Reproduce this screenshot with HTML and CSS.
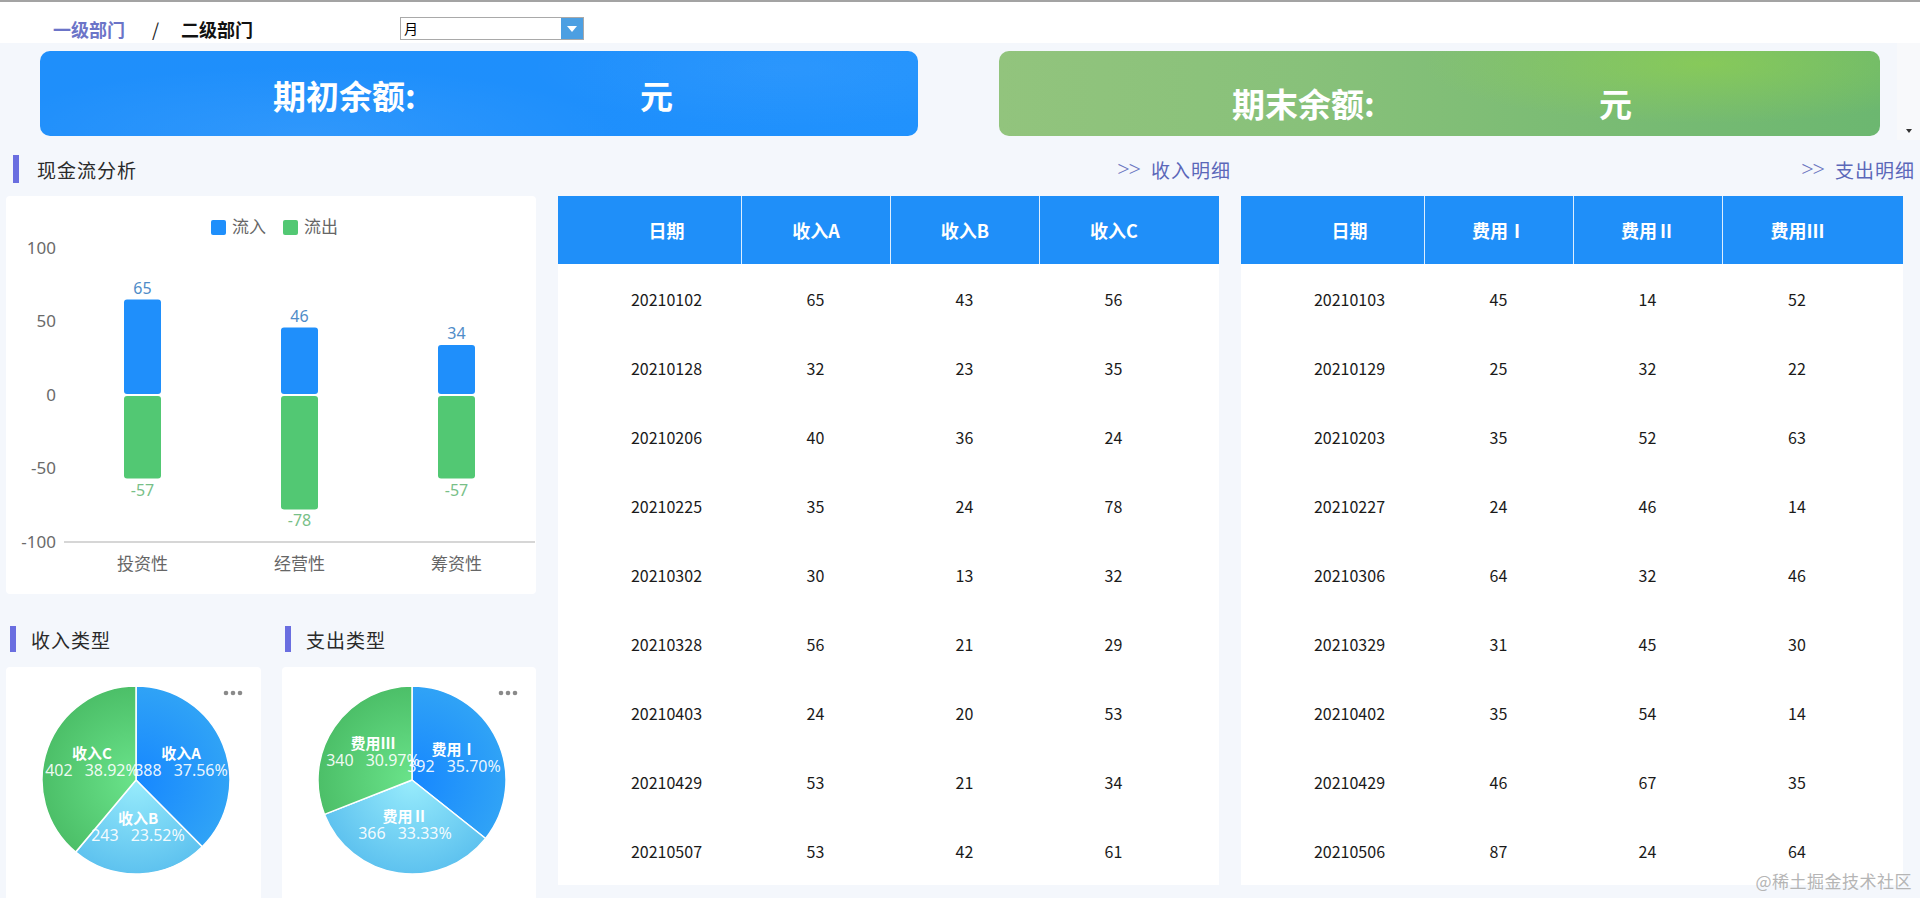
FILE: index.html
```html
<!DOCTYPE html>
<html lang="zh-CN">
<head>
<meta charset="utf-8">
<title>现金流分析</title>
<link rel="stylesheet" href="styles.css">
</head>
<body>
<div class="topline"></div>
<div class="header">
  <div class="crumbs">
    <span class="crumb-first">一级部门</span>
    <span class="crumb-sep">/</span>
    <span class="crumb-cur">二级部门</span>
  </div>
  <div class="select">
    <span class="select-val">月</span>
    <span class="select-btn"><svg width="10" height="6" viewBox="0 0 10 6"><path d="M0 0H10L5 6Z" fill="#fff"/></svg></span>
  </div>
</div>

<div class="banner-row">
  <div class="banner banner-blue">
    <span class="banner-label">期初余额:</span><span class="banner-unit">元</span>
  </div>
  <div class="banner banner-green">
    <span class="banner-label">期末余额:</span><span class="banner-unit">元</span>
  </div>
  <div class="vscroll"><span class="vscroll-arrow"></span></div>
</div>

<div class="main">
  <div class="col col-left">
    <div class="title-row">
      <span class="title-bar"></span><span class="title-text">现金流分析</span>
    </div>
    <div class="card bar-card">
      <svg class="chart" width="530" height="398" viewBox="0 0 530 398">
        <rect x="205" y="24" width="15" height="15" rx="2" fill="#1f8ffb"/>
        <text class="lg" x="226" y="37">流入</text>
        <rect x="277" y="24" width="15" height="15" rx="2" fill="#52c873"/>
        <text class="lg" x="298" y="37">流出</text>

        <text class="ay" x="50" y="58">100</text>
        <text class="ay" x="50" y="131">50</text>
        <text class="ay" x="50" y="205">0</text>
        <text class="ay" x="50" y="278">-50</text>
        <text class="ay" x="50" y="352">-100</text>
        <line x1="58" y1="346" x2="529" y2="346" stroke="#c8c8c8" stroke-width="1.5"/>

        <rect x="118" y="103.6" width="37" height="94.4" rx="3" fill="#1f8ffb"/>
        <rect x="118" y="200" width="37" height="82.6" rx="3" fill="#52c873"/>
        <rect x="275" y="131.5" width="37" height="66.5" rx="3" fill="#1f8ffb"/>
        <rect x="275" y="200" width="37" height="113.4" rx="3" fill="#52c873"/>
        <rect x="432" y="149.1" width="37" height="48.9" rx="3" fill="#1f8ffb"/>
        <rect x="432" y="200" width="37" height="82.6" rx="3" fill="#52c873"/>

        <text class="vb" x="136.5" y="98">65</text>
        <text class="vb" x="293.5" y="126">46</text>
        <text class="vb" x="450.5" y="143">34</text>
        <text class="vg" x="136.5" y="300">-57</text>
        <text class="vg" x="293.5" y="330">-78</text>
        <text class="vg" x="450.5" y="300">-57</text>

        <text class="ax" x="136.5" y="374">投资性</text>
        <text class="ax" x="293.5" y="374">经营性</text>
        <text class="ax" x="450.5" y="374">筹资性</text>
      </svg>
    </div>
    <div class="pie-row">
      <div class="pie-col pie-col-1">
        <div class="sub-title-row">
          <span class="title-bar sub-bar"></span><span class="title-text">收入类型</span>
        </div>
        <div class="card pie-card">
          <svg class="pie" width="255" height="240" viewBox="0 0 255 240">
            <defs>
              <radialGradient id="ga1" cx="130" cy="113" r="94" gradientUnits="userSpaceOnUse"><stop offset="0" stop-color="#1687ff"/><stop offset="1" stop-color="#30a3f6"/></radialGradient>
              <radialGradient id="gb1" cx="130" cy="113" r="94" gradientUnits="userSpaceOnUse"><stop offset="0" stop-color="#98ecfc"/><stop offset="1" stop-color="#5ec2ef"/></radialGradient>
              <radialGradient id="gc1" cx="130" cy="113" r="94" gradientUnits="userSpaceOnUse"><stop offset="0" stop-color="#6ae38a"/><stop offset="1" stop-color="#4cbf68"/></radialGradient>
            </defs>
            <path d="M130 113L130 19A94 94 0 0 1 196.2 179.7Z" fill="url(#ga1)" stroke="#fff" stroke-width="1.5"/>
            <path d="M130 113L196.2 179.7A94 94 0 0 1 69.7 185.1Z" fill="url(#gb1)" stroke="#fff" stroke-width="1.5"/>
            <path d="M130 113L69.7 185.1A94 94 0 0 1 130 19Z" fill="url(#gc1)" stroke="#fff" stroke-width="1.5"/>
            <text class="pn" x="175" y="92">收入A</text>
            <text class="pv" x="175" y="109">388<tspan dx="12">37.56%</tspan></text>
            <text class="pn" x="132" y="157">收入B</text>
            <text class="pv" x="132" y="174">243<tspan dx="12">23.52%</tspan></text>
            <text class="pn" x="86" y="92">收入C</text>
            <text class="pv" x="86" y="109">402<tspan dx="12">38.92%</tspan></text>
            <circle cx="220" cy="26" r="2.3" fill="#8a8a8a"/>
            <circle cx="227" cy="26" r="2.3" fill="#8a8a8a"/>
            <circle cx="234" cy="26" r="2.3" fill="#8a8a8a"/>
          </svg>
        </div>
      </div>
      <div class="pie-col pie-col-2">
        <div class="sub-title-row">
          <span class="title-bar sub-bar sub-bar-2"></span><span class="title-text">支出类型</span>
        </div>
        <div class="card pie-card">
          <svg class="pie" width="254" height="240" viewBox="0 0 254 240">
            <defs>
              <radialGradient id="ga2" cx="130" cy="113" r="94" gradientUnits="userSpaceOnUse"><stop offset="0" stop-color="#1687ff"/><stop offset="1" stop-color="#30a3f6"/></radialGradient>
              <radialGradient id="gb2" cx="130" cy="113" r="94" gradientUnits="userSpaceOnUse"><stop offset="0" stop-color="#98ecfc"/><stop offset="1" stop-color="#5ec2ef"/></radialGradient>
              <radialGradient id="gc2" cx="130" cy="113" r="94" gradientUnits="userSpaceOnUse"><stop offset="0" stop-color="#6ae38a"/><stop offset="1" stop-color="#4cbf68"/></radialGradient>
            </defs>
            <path d="M130 113L130 19A94 94 0 0 1 203.6 171.5Z" fill="url(#ga2)" stroke="#fff" stroke-width="1.5"/>
            <path d="M130 113L203.6 171.5A94 94 0 0 1 42.5 147.4Z" fill="url(#gb2)" stroke="#fff" stroke-width="1.5"/>
            <path d="M130 113L42.5 147.4A94 94 0 0 1 130 19Z" fill="url(#gc2)" stroke="#fff" stroke-width="1.5"/>
            <text class="pn" x="172" y="88">费用Ⅰ</text>
            <text class="pv" x="172" y="105">392<tspan dx="12">35.70%</tspan></text>
            <text class="pn" x="123" y="155">费用Ⅱ</text>
            <text class="pv" x="123" y="172">366<tspan dx="12">33.33%</tspan></text>
            <text class="pn" x="91" y="82">费用Ⅲ</text>
            <text class="pv" x="91" y="99">340<tspan dx="12">30.97%</tspan></text>
            <circle cx="219" cy="26" r="2.3" fill="#8a8a8a"/>
            <circle cx="226" cy="26" r="2.3" fill="#8a8a8a"/>
            <circle cx="233" cy="26" r="2.3" fill="#8a8a8a"/>
          </svg>
        </div>
      </div>
    </div>
  </div>

  <div class="col col-mid">
    <div class="title-row title-link-row">
      <span class="link"><span class="link-arrow">&gt;&gt;</span>收入明细</span>
    </div>
    <div class="table-card">
      <div class="trow thead"><div class="c c1">日期</div><div class="c">收入A</div><div class="c">收入B</div><div class="c c4">收入C</div></div>
      <div class="trow"><div class="c c1">20210102</div><div class="c">65</div><div class="c">43</div><div class="c c4">56</div></div>
      <div class="trow"><div class="c c1">20210128</div><div class="c">32</div><div class="c">23</div><div class="c c4">35</div></div>
      <div class="trow"><div class="c c1">20210206</div><div class="c">40</div><div class="c">36</div><div class="c c4">24</div></div>
      <div class="trow"><div class="c c1">20210225</div><div class="c">35</div><div class="c">24</div><div class="c c4">78</div></div>
      <div class="trow"><div class="c c1">20210302</div><div class="c">30</div><div class="c">13</div><div class="c c4">32</div></div>
      <div class="trow"><div class="c c1">20210328</div><div class="c">56</div><div class="c">21</div><div class="c c4">29</div></div>
      <div class="trow"><div class="c c1">20210403</div><div class="c">24</div><div class="c">20</div><div class="c c4">53</div></div>
      <div class="trow"><div class="c c1">20210429</div><div class="c">53</div><div class="c">21</div><div class="c c4">34</div></div>
      <div class="trow"><div class="c c1">20210507</div><div class="c">53</div><div class="c">42</div><div class="c c4">61</div></div>
    </div>
  </div>

  <div class="col col-right">
    <div class="title-row title-link-row">
      <span class="link"><span class="link-arrow">&gt;&gt;</span>支出明细</span>
    </div>
    <div class="table-card">
      <div class="trow thead"><div class="c c1">日期</div><div class="c">费用Ⅰ</div><div class="c">费用Ⅱ</div><div class="c c4">费用Ⅲ</div></div>
      <div class="trow"><div class="c c1">20210103</div><div class="c">45</div><div class="c">14</div><div class="c c4">52</div></div>
      <div class="trow"><div class="c c1">20210129</div><div class="c">25</div><div class="c">32</div><div class="c c4">22</div></div>
      <div class="trow"><div class="c c1">20210203</div><div class="c">35</div><div class="c">52</div><div class="c c4">63</div></div>
      <div class="trow"><div class="c c1">20210227</div><div class="c">24</div><div class="c">46</div><div class="c c4">14</div></div>
      <div class="trow"><div class="c c1">20210306</div><div class="c">64</div><div class="c">32</div><div class="c c4">46</div></div>
      <div class="trow"><div class="c c1">20210329</div><div class="c">31</div><div class="c">45</div><div class="c c4">30</div></div>
      <div class="trow"><div class="c c1">20210402</div><div class="c">35</div><div class="c">54</div><div class="c c4">14</div></div>
      <div class="trow"><div class="c c1">20210429</div><div class="c">46</div><div class="c">67</div><div class="c c4">35</div></div>
      <div class="trow"><div class="c c1">20210506</div><div class="c">87</div><div class="c">24</div><div class="c c4">64</div></div>
    </div>
  </div>
</div>
<div class="watermark">@稀土掘金技术社区</div>
</body>
</html>
```

FILE: styles.css
```css
* { box-sizing: border-box; }
html, body { margin: 0; padding: 0; }
body {
  width: 1920px;
  height: 898px;
  overflow: hidden;
  background: #f4f7fc;
  font-family: "Noto Sans CJK SC", "Noto Sans", sans-serif;
  color: #222;
  position: relative;
}

.topline { height: 2px; background: #a3a3a3; }

.header {
  height: 41px;
  background: #fff;
  display: flex;
  align-items: flex-start;
  padding: 15px 0 0 53px;
}
.crumbs {
  width: 347px;
  flex-shrink: 0;
  display: flex;
  align-items: center;
  height: 24px;
  font-size: 18px;
  font-weight: 700;
  line-height: 24px;
}
.crumb-first { color: #6b74c8; }
.crumb-sep { color: #222; font-weight: 400; margin: 0 22px 0 27px; }
.crumb-cur { color: #111; }

.select {
  width: 184px;
  height: 23px;
  border: 1px solid #a9a9a9;
  background: #fff;
  display: flex;
  justify-content: space-between;
}
.select-val { font-size: 14px; line-height: 21px; padding-left: 3px; color: #000; }
.select-btn {
  width: 22px;
  height: 21px;
  background: #4c9fe2;
  display: flex;
  align-items: center;
  justify-content: center;
}

.banner-row {
  height: 99px;
  display: flex;
  align-items: flex-start;
  padding: 8px 0 0 40px;
}
.banner {
  flex-shrink: 0;
  height: 85px;
  border-radius: 10px;
  display: flex;
  align-items: center;
  padding-left: 233px;
  color: #fff;
  font-size: 33px;
  font-weight: 700;
}
.banner-blue {
  width: 878px;
  padding-top: 2px;
  background:
    radial-gradient(ellipse 320px 70px at 30% 100%, rgba(255,255,255,0.08), rgba(255,255,255,0) 100%),
    radial-gradient(ellipse 260px 60px at 85% 20%, rgba(255,255,255,0.05), rgba(255,255,255,0) 100%),
    linear-gradient(90deg, #1f8ffb, #1e8ffc 60%, #2192fd);
}
.banner-green {
  width: 881px;
  margin-left: 81px;
  padding-top: 18px;
  background:
    radial-gradient(ellipse 280px 60px at 80% 15%, rgba(150,214,70,0.55), rgba(150,214,70,0) 100%),
    linear-gradient(90deg, #92c47d 0%, #88c17a 35%, #7bbc74 65%, #6cb770 100%);
}
.banner-label { width: 367px; }

.vscroll {
  flex-shrink: 0;
  margin-left: auto;
  width: 23px;
  height: 97px;
  margin-top: -8px;
  background: #f8f9fb;
  display: flex;
  align-items: flex-end;
  justify-content: center;
  padding-bottom: 7px;
}
.vscroll-arrow {
  width: 0; height: 0;
  border-left: 3px solid transparent;
  border-right: 3px solid transparent;
  border-top: 4px solid #333;
}

.main {
  display: flex;
  padding-left: 6px;
  gap: 22px;
  align-items: flex-start;
}
.col { display: flex; flex-direction: column; flex-shrink: 0; }
.col-left { width: 530px; }
.col-mid { width: 661px; }
.col-right { width: 662px; }

.title-row {
  height: 54px;
  display: flex;
  align-items: center;
  padding-left: 7px;
}
.title-bar {
  width: 6px;
  height: 28px;
  background: #6a6ee0;
  margin-right: 18px;
}
.title-text {
  font-size: 19px;
  color: #2a2a2a;
  letter-spacing: 1px;
}
.title-link-row { justify-content: flex-end; padding-left: 0; margin-right: -12px; }
.link {
  font-size: 19px;
  color: #5b67b9;
  letter-spacing: 1px;
  display: flex;
  align-items: center;
}
.link-arrow {
  font-family: "Liberation Serif", serif;
  font-size: 22px;
  letter-spacing: -1px;
  margin-right: 11px;
  color: #6a74c0;
}

.card { background: #fff; border-radius: 4px; }
.bar-card { height: 398px; }
.chart { display: block; }
.chart .lg { font-size: 17px; fill: #666; }
.chart .ay { font-family: "Noto Sans", sans-serif; font-size: 17px; fill: #6a6a6a; text-anchor: end; }
.chart .ax { font-size: 17px; fill: #666; text-anchor: middle; }
.chart .vb { font-family: "Noto Sans", sans-serif; font-size: 16px; fill: #4f8cc8; text-anchor: middle; }
.chart .vg { font-family: "Noto Sans", sans-serif; font-size: 16px; fill: #78bf88; text-anchor: middle; }

.pie-row { display: flex; gap: 21px; }
.pie-col-1 { width: 255px; }
.pie-col-2 { width: 254px; }
.sub-title-row {
  height: 73px;
  padding-top: 17px;
  display: flex;
  align-items: center;
}
.sub-bar { height: 26px; margin-left: 4px; margin-right: 15px; }
.sub-bar-2 { margin-left: 3px; }
.pie-card { height: 240px; }
.pie { display: block; }
.pie .pn { font-size: 15px; font-weight: 700; fill: #fff; text-anchor: middle; }
.pie .pv { font-family: "Noto Sans", sans-serif; font-size: 16px; fill: #fff; fill-opacity: 0.92; text-anchor: middle; }

.table-card { background: #fff; height: 689px; }
.trow {
  display: grid;
  grid-template-columns: 183px 149px 149px 1fr;
  height: 69px;
  align-items: center;
  font-size: 16px;
  color: #1a1a1a;
}
.trow .c { text-align: center; height: 100%; display: flex; align-items: center; justify-content: center; }
.trow .c1 { padding-left: 34px; }
.trow .c4 { padding-right: 31px; }
.thead {
  height: 68px;
  background: #1f8ff9;
  color: #fff;
  font-size: 18px;
  font-weight: 700;
}
.thead .c + .c { border-left: 1px solid rgba(255,255,255,0.85); }

.watermark {
  position: absolute;
  right: 8px;
  bottom: 5px;
  font-size: 17px;
  color: #b5b5b5;
  letter-spacing: 0.5px;
}
```
